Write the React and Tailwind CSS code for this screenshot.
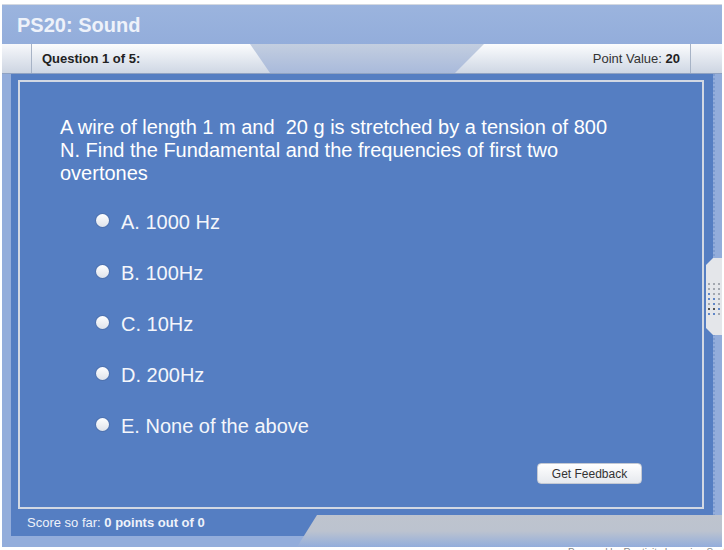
import React from 'react';

const options = ['A. 1000 Hz', 'B. 100Hz', 'C. 10Hz', 'D. 200Hz', 'E. None of the above'];

const dots = [
  'g', 'g', 'g',
  'g', 'g', 'g',
  'b', 'g', 'g',
  'b', 'b', 'g',
  'g', 'b', 'g',
  'k', 'k', 'b',
  'b', 'b', 'g',
];

const Radio = () => (
  <span className="mt-[3px] block w-[13px] h-[13px] shrink-0 rounded-full bg-gradient-to-b from-white to-[#dfe3ea] shadow-[0_0_0_1px_rgba(60,80,120,0.25)]" />
);

export default function App() {
  return (
    <div className="relative w-[724px] h-[550px] overflow-hidden bg-white font-['Liberation_Sans',Arial,sans-serif]">
      <div className="pt-[4px] px-[2px]">
        <div className="w-[720px] border-t border-[#d3d8e0]">
          {/* title */}
          <div className="h-[39px] bg-gradient-to-b from-[#9bb4de] to-[#93addb] pl-[15px] flex items-center">
            <h1 className="text-[20px] font-bold text-[#eef2fa] leading-none">PS20: Sound</h1>
          </div>

          {/* tab bar */}
          <div className="h-[30px] flex bg-gradient-to-b from-[#c3cee0] to-[#a9badb] border-b border-[#8fa2c2]">
            <div className="w-[30px] bg-gradient-to-b from-[#f7f8fb] to-[#cdd5e2] border-r border-[#a7b3c6]" />
            <div className="w-[238px] bg-gradient-to-b from-[#fbfcfd] to-[#cfd7e4] [clip-path:polygon(0_0,218px_0,100%_100%,0_100%)] pl-[10px] flex items-center">
              <span className="text-[13px] font-bold text-[#222]">Question 1 of 5:</span>
            </div>
            <div className="w-[185px]" />
            <div className="w-[235px] bg-gradient-to-b from-[#fbfcfd] to-[#cfd7e4] [clip-path:polygon(29px_0,100%_0,100%_100%,0_100%)] pr-[10px] flex items-center justify-end">
              <span className="text-[13px] text-[#333]">Point Value: <b className="text-[#222]">20</b></span>
            </div>
            <div className="w-[32px] bg-gradient-to-b from-[#f7f8fb] to-[#cdd5e2] border-l border-[#a7b3c6]" />
          </div>

          {/* body */}
          <div className="flex bg-[#93addb] pb-[11px]">
            <div className="w-[9px]" />
            <div className="w-[702px] h-[462px] bg-[#557ec2] flex flex-col">
              <div className="ml-[7px] mt-[6px] w-[686px] h-[429px] border-2 border-[#d2d8e3] pt-[34px] pl-[40px] flex flex-col">
                <p className="w-[560px] text-[20px] leading-[23px] text-white">
                  A wire of length 1 m and{'\u00a0'} 20 g is stretched by a tension of 800 N. Find the Fundamental and the frequencies of first two overtones
                </p>
                <ul className="mt-[26px] ml-[36px] flex flex-col gap-[28px]">
                  {options.map((o) => (
                    <li key={o} className="flex items-start gap-[12px] h-[23px]">
                      <Radio />
                      <span className="text-[20px] leading-[23px] text-[#f4f6fb]">{o}</span>
                    </li>
                  ))}
                </ul>
                <div className="mt-[25px] pr-[60px] flex justify-end">
                  <button className="w-[105px] h-[21px] rounded-[4px] border border-[#c4c9d3] bg-gradient-to-b from-white to-[#e6e9ee] text-[12px] text-[#333] leading-none">
                    Get Feedback
                  </button>
                </div>
              </div>
              <div className="h-[27px] pl-[16px] flex items-center text-[13px] text-[#eef2fa]">
                <span>Score so far: <b>0 points out of 0</b></span>
              </div>
            </div>
            <div className="w-[9px] border-l-2 border-dotted border-[#7e9cd0]" />
          </div>
        </div>
      </div>

      {/* bottom right slanted strip */}
      <div className="absolute left-[297px] top-[515px] w-[425px] h-[32px] bg-gradient-to-b from-[#bec4ce] via-[#bcc3cf] to-[#93addb] [clip-path:polygon(20px_0,100%_0,100%_100%,0_100%)]" />

      {/* side handle */}
      <div className="absolute left-[706px] top-[258px] w-[16px] h-[77px] bg-[#e4e6ea] [clip-path:polygon(7px_0,100%_0,100%_100%,7px_100%,0_calc(100%-7px),0_7px)] flex items-center justify-center">
        <div className="grid grid-cols-3 gap-[3px] mt-[4px]">
          {dots.map((c, i) => (
            <span
              key={i}
              className={
                'block w-[2px] h-[2px] ' +
                (c === 'b' ? 'bg-[#5f86c8]' : c === 'k' ? 'bg-[#555]' : 'bg-[#a3a8b0]')
              }
            />
          ))}
        </div>
      </div>

      {/* footer credit, mostly cut off */}
      <div className="absolute left-[568px] top-[545px] text-[10px] text-[#8a8a8a] whitespace-nowrap">
        Powered by Raptivity Learning System
      </div>
    </div>
  );
}
